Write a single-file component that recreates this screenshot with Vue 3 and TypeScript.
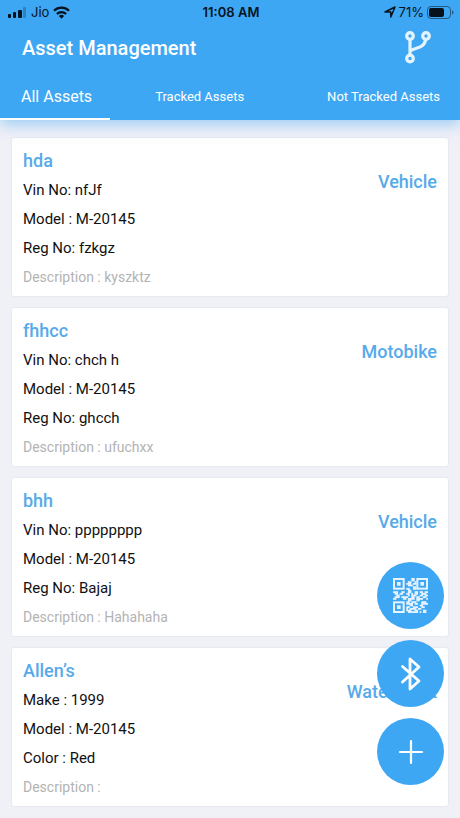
<script setup lang="ts">
import { ref } from 'vue'

interface Asset {
  name: string
  type: string
  details: string[]
  description: string
}

const tabs: string[] = ['All Assets', 'Tracked Assets', 'Not Tracked Assets']
const activeTab = ref(0)

const assets: Asset[] = [
  { name: 'hda', type: 'Vehicle', details: ['Vin No: nfJf', 'Model : M-20145', 'Reg No: fzkgz'], description: 'kyszktz' },
  { name: 'fhhcc', type: 'Motobike', details: ['Vin No: chch h', 'Model : M-20145', 'Reg No: ghcch'], description: 'ufuchxx' },
  { name: 'bhh', type: 'Vehicle', details: ['Vin No: pppppppp', 'Model : M-20145', 'Reg No: Bajaj'], description: 'Hahahaha' },
  { name: 'Allen’s', type: 'Water Tank', details: ['Make : 1999', 'Model : M-20145', 'Color : Red'], description: '' },
]

// Data modules of the QR glyph, 21 a side; the three finder squares are drawn apart
const qrRows: string[] = [
  '...........##........',
  '...........##........',
  '.........##..#.......',
  '........###.##.......',
  '.........###.........',
  '............##.......',
  '........##..##.......',
  '.........##..........',
  '###..##..##..##.##.##',
  '.##.##..##.#.##..###.',
  '..##.....#.###..##.##',
  '.###.####..##.##..##.',
  '##....##.####.####..#',
  '.........##...##.....',
  '........##.###...###.',
  '........####.##..####',
  '..........##....##...',
  '........##..###..##..',
  '........#.####.##....',
  '........###..##...##.',
  '.........######.#.##.',
]
const qrPath = qrRows
  .flatMap((row, y) => [...row].map((c, x) => (c === '#' ? `M${x} ${y}h1v1h-1z` : '')))
  .join('')
const finders: [number, number][] = [[0, 0], [14, 0], [0, 14]]
</script>

<template>
  <div class="screen">
    <header class="header">
      <div class="status">
        <div class="status-left">
          <svg width="19" height="11" viewBox="0 0 19 11" aria-hidden="true">
            <rect x="0" y="7" width="3" height="4" rx="1" />
            <rect x="5" y="5" width="3" height="6" rx="1" />
            <rect x="10" y="3" width="4" height="8" rx="1" />
            <rect x="15" y="0" width="3" height="11" rx="1" opacity="0.25" />
          </svg>
          <span class="carrier">Jio</span>
          <svg width="17" height="13" viewBox="0 0 17 13" aria-hidden="true">
            <g fill="none" stroke="#06121c" stroke-width="2.3">
              <path d="M1 4.8a10.6 10.6 0 0 1 15 0" />
              <path d="M3.9 8a6.6 6.6 0 0 1 9.2 0" />
            </g>
            <path d="M8.5 12.8L5.9 10a3.7 3.7 0 0 1 5.2 0z" />
          </svg>
        </div>
        <span class="time">11:08 AM</span>
        <div class="status-right">
          <svg width="12" height="12" viewBox="0 0 12 12" aria-hidden="true">
            <path d="M1 6L11 1 6.8 11V6z" fill="none" stroke="#06121c" stroke-width="1.5" stroke-linejoin="round" />
          </svg>
          <span class="percent">71%</span>
          <svg width="27" height="13" viewBox="0 0 27 13" aria-hidden="true">
            <rect x="0.5" y="0.5" width="23" height="12" rx="3.5" fill="none" stroke="#06121c" stroke-opacity="0.5" />
            <rect x="2" y="2" width="15" height="9" rx="2" />
            <path d="M25 4.5q1.5.4 1.5 2t-1.5 2z" opacity="0.5" />
          </svg>
        </div>
      </div>

      <div class="title-bar">
        <h1>Asset Management</h1>
        <button class="branch" type="button" aria-label="Branches">
          <svg width="26" height="34" viewBox="0 0 26 34" fill="none" stroke="#e4f4ff" aria-hidden="true">
            <g stroke-width="3.2">
              <circle cx="5" cy="5" r="3.3" />
              <circle cx="21" cy="5" r="3.3" />
              <circle cx="5" cy="27.500" r="3.3" />
              <path d="M5 8.500v15.500M5 20c4-3.500 15-2.500 15.500-11.500" />
            </g>
          </svg>
        </button>
      </div>

      <nav class="tabs">
        <button
          v-for="(tab, i) in tabs"
          :key="tab"
          type="button"
          class="tab"
          :class="{ active: i === activeTab }"
          @click="activeTab = i"
        >{{ tab }}</button>
      </nav>
    </header>

    <main class="list">
      <article v-for="asset in assets" :key="asset.name" class="card">
        <div class="info">
          <h2>{{ asset.name }}</h2>
          <p v-for="line in asset.details" :key="line">{{ line }}</p>
          <p class="description">Description : {{ asset.description }}</p>
        </div>
        <span class="type">{{ asset.type }}</span>
      </article>
    </main>

    <div class="actions">
      <button type="button" aria-label="Scan QR code">
        <svg width="35" height="35" viewBox="0 0 21 21" aria-hidden="true">
          <path :d="qrPath" fill="#e4f4ff" stroke="#e4f4ff" stroke-width="0.1" />
          <g v-for="[x, y] in finders" :key="`${x}-${y}`">
            <rect :x="x + 0.6" :y="y + 0.6" width="5.8" height="5.8" fill="none" stroke="#e4f4ff" stroke-width="1.2" />
            <rect :x="x + 2.4" :y="y + 2.4" width="2.2" height="2.2" fill="#e4f4ff" />
          </g>
        </svg>
      </button>
      <button type="button" aria-label="Bluetooth">
        <svg width="34" height="34" viewBox="0 0 34 34" fill="none" stroke="#fff" stroke-width="2.8" stroke-linecap="round" stroke-linejoin="round" aria-hidden="true">
          <path d="M8.500 9.500L25 24l-9 8V2l9 8L8.500 25" />
        </svg>
      </button>
      <button type="button" aria-label="Add asset">
        <svg width="26" height="26" viewBox="0 0 26 26" stroke="#fff" stroke-width="2.2" stroke-linecap="round" aria-hidden="true">
          <path d="M13 2v22M2 13h22" />
        </svg>
      </button>
    </div>
  </div>
</template>

<style>
body {
  background: #f0f0f7;
}
</style>

<style scoped>
.screen {
  height: 100vh;
  overflow: hidden;
  background: #f0f0f7;
  font-family: Roboto, sans-serif;
  color: #111;
}

button {
  border: 0;
  padding: 0;
  background: none;
  font: inherit;
  color: inherit;
  cursor: pointer;
}

.header {
  position: relative;
  background: #3da7f4;
  color: #fff;
  box-shadow: 0 4px 14px rgba(61, 167, 244, 0.5);
}

.status {
  display: grid;
  grid-template-columns: 1fr auto 1fr;
  align-items: center;
  height: 24px;
  padding: 0 6px 0 8px;
  font-family: Inter, sans-serif;
  font-size: 13px;
  color: #06121c;
  fill: #06121c;
}

.status-left,
.status-right {
  display: flex;
  align-items: center;
  gap: 4px;
}

.status-right {
  justify-content: flex-end;
  gap: 3px;
}

.time {
  font-weight: 600;
}

.title-bar {
  display: flex;
  align-items: center;
  justify-content: space-between;
  height: 48px;
  padding: 0 29px 0 22px;
}

h1 {
  margin: 0;
  font-size: 20px;
  font-weight: 500;
}

.branch {
  display: flex;
}

.tabs {
  display: flex;
  height: 48px;
}

.tab {
  padding: 3px 20px 0;
  font-size: 13px;
  border-bottom: 2px solid transparent;
}

.tab:first-child {
  padding: 3px 18px 0 21px;
  margin-right: 25px;
}

.tab:last-child {
  margin-left: auto;
}

.tab.active {
  font-size: 16px;
  border-bottom-color: #fff;
}

.list {
  display: flex;
  flex-direction: column;
  gap: 12px;
  padding: 18px 12px;
}

.card {
  display: flex;
  justify-content: space-between;
  padding: 7px 11px 4px;
  background: #fff;
  border-radius: 2px;
  box-shadow: 0 0 2px rgba(60, 60, 100, 0.12);
}

h2,
p {
  margin: 0;
  font-weight: 400;
  font-size: 15px;
  line-height: 29px;
}

h2,
.type {
  font-size: 18px;
  font-weight: 500;
  line-height: 31px;
  color: #57aaea;
}

.type {
  padding-top: 21px;
}

.description {
  font-size: 14px;
  color: #b3b3b3;
}

.actions {
  position: fixed;
  right: 16px;
  bottom: 33px;
  display: flex;
  flex-direction: column;
  gap: 11px;
}

.actions button {
  display: flex;
  align-items: center;
  justify-content: center;
  width: 67px;
  height: 67px;
  border-radius: 50%;
  background: #3da7f4;
}
</style>
